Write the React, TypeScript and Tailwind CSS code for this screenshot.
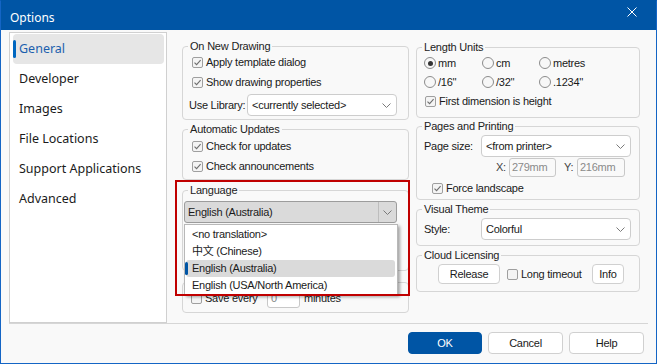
import type { ReactNode } from "react";

const Chevron = () => (
  <svg width="9" height="5" viewBox="0 0 9 5" className="shrink-0">
    <path d="M0.5 0.5 L4.5 4.5 L8.5 0.5" fill="none" stroke="#7a7a7a" strokeWidth="1" />
  </svg>
);

const Group = ({ title, className, children }: { title: string; className: string; children: ReactNode }) => (
  <fieldset className={`border border-[#d6d6d6] rounded-[4px] flex flex-col ${className}`}>
    <legend className="ml-[5px] px-[2px] h-[14px] text-[11px] leading-[14px] text-[#222] tracking-[-0.2px]">{title}</legend>
    {children}
  </fieldset>
);

const Check = ({ label, on = true, className = "" }: { label: string; on?: boolean; className?: string }) => (
  <div className={`flex items-center h-[18px] gap-[3px] ${className}`}>
    <span className="w-[11px] h-[11px] border border-[#9f9f9f] rounded-[2px] bg-[#f4f4f4] flex items-center justify-center shrink-0">
      {on && (
        <svg width="9" height="9" viewBox="0 0 9 9">
          <path d="M1.5 4.6 L3.6 6.7 L7.6 2.2" fill="none" stroke="#6f6f6f" strokeWidth="1.1" />
        </svg>
      )}
    </span>
    <span className="whitespace-nowrap">{label}</span>
  </div>
);

const Radio = ({ label, on = false }: { label: string; on?: boolean }) => (
  <div className="flex items-center gap-[2px] h-[18px]">
    <span className="w-[12px] h-[12px] rounded-full border border-[#8c8c8c] bg-[#f7f7f7] flex items-center justify-center">
      {on && <span className="w-[5px] h-[5px] rounded-full bg-[#333]" />}
    </span>
    <span className="whitespace-nowrap">{label}</span>
  </div>
);

const Combo = ({ value, className = "" }: { value: string; className?: string }) => (
  <div className={`h-[22px] bg-white border border-[#cdcdcd] rounded-[4px] flex items-center justify-between pl-[4px] pr-[5px] ${className}`}>
    <span className="whitespace-nowrap">{value}</span>
    <Chevron />
  </div>
);

const Btn = ({ label, className = "" }: { label: string; className?: string }) => (
  <div className={`bg-white border border-[#d0d0d0] rounded-[4px] flex items-center justify-center ${className}`}>{label}</div>
);

const navItems = ["General", "Developer", "Images", "File Locations", "Support Applications", "Advanced"];
const languages = ["<no translation>", "中文 (Chinese)", "English (Australia)", "English (USA/North America)"];

export default function App() {
  return (
    <div className="relative w-[657px] h-[364px] bg-[#f9f9f9] border border-[#1465c5] border-t-[#0055a5] flex flex-col overflow-hidden text-[11px] text-[#1a1a1a] tracking-[-0.25px] font-['Liberation_Sans','Noto_Sans_CJK_SC',Arial,sans-serif]">
      {/* title bar */}
      <div className="h-[29px] bg-[#0055a5] flex items-start justify-between pl-[9px] pr-[19px] shrink-0">
        <span className="mt-[9px] text-white text-[12px] leading-[16px] tracking-normal font-['Noto_Sans',sans-serif]">Options</span>
        <svg width="10" height="10" viewBox="0 0 10 10" className="mt-[6px]">
          <path d="M0.5 0.5 L9.5 9.5 M9.5 0.5 L0.5 9.5" stroke="#ffffff" strokeWidth="1" />
        </svg>
      </div>

      {/* body */}
      <div className="h-[293px] flex shrink-0">
        <div className="mt-[2px] ml-[8px] w-[158px] h-[291px] bg-white border border-[#d0d0d0] pt-[1px] pl-[3px] pr-[2px] flex flex-col font-['Noto_Sans',sans-serif] text-[12.5px] tracking-normal">
          {navItems.map((item, i) => (
            <div
              key={item}
              className={`relative h-[30px] flex items-center pl-[6px] rounded-[4px] ${i === 0 ? "bg-[#e6e6e6] text-[#1b5fae]" : "text-[#1b1b1b]"}`}
            >
              {i === 0 && <span className="absolute left-0 top-[6px] w-[3px] h-[18px] rounded-full bg-[#0067c0]" />}
              {item}
            </div>
          ))}
        </div>

        {/* column 1 */}
        <div className="ml-[15px] pt-[9px] w-[227px] flex flex-col">
          <Group title="On New Drawing" className="h-[81px]">
            <Check label="Apply template dialog" className="pl-[9px]" />
            <Check label="Show drawing properties" className="pl-[9px] mt-[2px]" />
            <div className="flex items-center mt-[3px] pl-[6px]">
              <span className="w-[58px] whitespace-nowrap">Use Library:</span>
              <Combo value="<currently selected>" className="w-[150px]" />
            </div>
          </Group>

          <Group title="Automatic Updates" className="h-[58px] mt-[2px]">
            <Check label="Check for updates" className="pl-[9px] mt-[1px]" />
            <Check label="Check announcements" className="pl-[9px] mt-[2px]" />
          </Group>

          <Group title="Language" className="h-[88px] mt-[3px]">
            <div className="relative ml-[1px] mt-[4px] w-[213px] h-[22px]">
              <div className="h-[22px] bg-[#dadada] border border-[#9c9c9c] rounded-[3px] flex items-center">
                <span className="flex-1 pl-[3px] whitespace-nowrap">English (Australia)</span>
                <span className="w-[18px] h-full border-l border-[#bdbdbd] flex items-center justify-center">
                  <Chevron />
                </span>
              </div>
              <div className="absolute left-0 top-[23px] w-[214px] h-[71px] bg-white border border-[#b8b8b8] shadow-[2px_2px_3px_rgba(0,0,0,0.35)] pt-[1px] z-10">
                {languages.map((lang, i) => (
                  <div
                    key={lang}
                    className={`relative h-[17px] flex items-center whitespace-nowrap ${i === 2 ? "ml-[1px] mr-[2px] pl-[6px] bg-[#dadada] rounded-[3px]" : "pl-[7px]"}`}
                  >
                    {i === 2 && <span className="absolute left-[-1px] top-[2px] w-[3px] h-[13px] rounded-full bg-[#0055a5]" />}
                    {lang}
                  </div>
                ))}
              </div>
            </div>
          </Group>

          {/* autosave group: its caption lies under the open list */}
          <fieldset className="h-[38px] mt-[4px] border border-[#d6d6d6] rounded-[4px] flex flex-col">
            <legend className="ml-[5px] w-[56px] h-[14px]" />
            <div className="flex items-center h-[19px] pl-[8px]">
              <Check label="Save every" on={false} className="w-[76px]" />
              <span className="w-[33px] h-[19px] border border-[#c8c8c8] rounded-[3px] bg-white pl-[3px] text-[#888] leading-[17px]">0</span>
              <span className="ml-[4px]">minutes</span>
            </div>
          </fieldset>
        </div>

        {/* column 2 */}
        <div className="ml-[7px] pt-[10px] w-[224px] flex flex-col">
          <Group title="Length Units" className="h-[78px]">
            <div className="grid grid-cols-[58px_57px_auto] pl-[7px] gap-y-[1px]">
              <Radio label="mm" on />
              <Radio label="cm" />
              <Radio label="metres" />
              <Radio label="/16''" />
              <Radio label="/32''" />
              <Radio label=".1234''" />
            </div>
            <Check label="First dimension is height" className="pl-[8px] mt-[1px]" />
          </Group>

          <Group title="Pages and Printing" className="h-[81px] mt-[1px]">
            <div className="flex items-center mt-[2px] pl-[7px]">
              <span className="w-[57px] whitespace-nowrap">Page size:</span>
              <Combo value="<from printer>" className="w-[150px]" />
            </div>
            <div className="flex items-center h-[19px] mt-[1px] pl-[79px] text-[#444]">
              <span className="w-[13px]">X:</span>
              <span className="w-[47px] h-[19px] border border-[#c8c8c8] rounded-[3px] pl-[2px] text-[#8a8a8a] leading-[17px]">279mm</span>
              <span className="ml-[8px] w-[13px]">Y:</span>
              <span className="w-[48px] h-[19px] border border-[#c8c8c8] rounded-[3px] pl-[2px] text-[#8a8a8a] leading-[17px]">216mm</span>
            </div>
            <Check label="Force landscape" className="pl-[15px] mt-[2px]" />
          </Group>

          <Group title="Visual Theme" className="h-[44px] mt-[2px]">
            <div className="flex items-center mt-[2px] pl-[7px]">
              <span className="w-[57px]">Style:</span>
              <Combo value="Colorful" className="w-[150px]" />
            </div>
          </Group>

          <Group title="Cloud Licensing" className="h-[44px] mt-[2px]">
            <div className="flex items-center mt-[2px] pl-[21px]">
              <Btn label="Release" className="w-[62px] h-[20px]" />
              <Check label="Long timeout" on={false} className="ml-[7px] w-[85px]" />
              <Btn label="Info" className="w-[32px] h-[20px]" />
            </div>
          </Group>
        </div>
      </div>

      {/* separator + footer */}
      <div className="h-px mx-[8px] bg-[#d6d6d6] shrink-0" />
      <div className="flex-1 flex justify-end items-start gap-[6px] pt-[8px] pr-[12px]">
        <div className="w-[74px] h-[22px] rounded-[4px] bg-[#0055a5] border border-[#0055a5] text-white flex items-center justify-center">OK</div>
        <Btn label="Cancel" className="w-[75px] h-[22px]" />
        <Btn label="Help" className="w-[75px] h-[22px]" />
      </div>

      {/* highlight annotation */}
      <div className="absolute left-[174px] top-[179px] w-[235px] h-[116px] border-2 border-[#c00000] pointer-events-none z-20" />
    </div>
  );
}
